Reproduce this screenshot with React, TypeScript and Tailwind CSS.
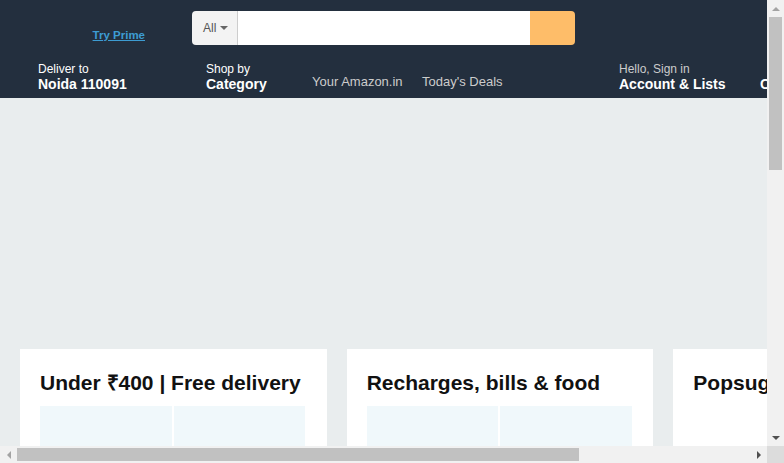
import React from "react";

const cards = [
  { title: "Under ₹400 | Free delivery", tiles: true },
  { title: "Recharges, bills & food", tiles: true },
  { title: "Popsugar beauty box", tiles: false },
];

function NavTwoLine({ top, bottom, topClass = "text-white" }: { top: string; bottom: string; topClass?: string }) {
  return (
    <div className="flex flex-col leading-none">
      <span className={`text-[12px] ${topClass}`}>{top}</span>
      <span className="mt-[2px] text-[14px] font-bold text-white">{bottom}</span>
    </div>
  );
}

// window scrollbars drawn over the page, as in the screenshot
function Scrollbars() {
  return (
    <div className="pointer-events-none fixed inset-0">
      <div className="absolute right-0 top-0 flex h-[446px] w-[17px] flex-col items-center bg-[#f1f1f1]">
        <div className="flex h-[17px] items-center justify-center">
          <span className="h-0 w-0 border-x-[4px] border-b-[4px] border-x-transparent border-b-[#a3a3a3]" />
        </div>
        <div className="h-[153px] w-[13px] bg-[#c1c1c1]" />
        <div className="flex-1" />
        <div className="flex h-[17px] items-center justify-center">
          <span className="h-0 w-0 border-x-[4px] border-t-[4px] border-x-transparent border-t-[#505050]" />
        </div>
      </div>
      <div className="absolute bottom-0 left-0 flex h-[17px] w-[767px] items-center bg-[#f1f1f1]">
        <div className="flex w-[17px] justify-center">
          <span className="h-0 w-0 border-y-[4px] border-r-[4px] border-y-transparent border-r-[#a3a3a3]" />
        </div>
        <div className="h-[13px] w-[562px] bg-[#c1c1c1]" />
        <div className="flex-1" />
        <div className="flex w-[17px] justify-center">
          <span className="h-0 w-0 border-y-[4px] border-l-[4px] border-y-transparent border-l-[#505050]" />
        </div>
      </div>
      <div className="absolute bottom-0 right-0 h-[17px] w-[17px] bg-[#dcdcdc]" />
    </div>
  );
}

export default function App() {
  return (
    <div className="min-w-[1000px] bg-[#e9edee] font-['Liberation_Sans',Arial,sans-serif]">
      {/* Header */}
      <header className="h-[98px] bg-[#232f3e]">
        <div className="flex h-[60px]">
          <div className="flex w-[192px] justify-end pr-[47px] pt-[30px]">
            <a href="#" className="text-[11.5px] font-bold leading-none text-[#3d9cd2] underline">
              Try Prime
            </a>
          </div>
          <div className="mt-[11px] flex h-[34px] w-[383px] overflow-hidden rounded-[4px]">
            <div className="flex w-[46px] items-center gap-[4px] border-r border-[#cdcdcd] bg-[#f3f3f3] pl-[11px] text-[12px] text-[#555]">
              All
              <span className="h-0 w-0 border-x-[4px] border-t-[4px] border-x-transparent border-t-[#666]" />
            </div>
            <div className="flex-1 bg-white" />
            <div className="w-[45px] bg-[#febd69]" />
          </div>
        </div>
        <div className="flex items-start pt-[3px]">
          <div className="w-[206px] pl-[38px]">
            <NavTwoLine top="Deliver to" bottom="Noida 110091" />
          </div>
          <div className="w-[106px]">
            <NavTwoLine top="Shop by" bottom="Category" />
          </div>
          <div className="w-[110px] pt-[12px] text-[13px] leading-none text-[#ccc]">Your Amazon.in</div>
          <div className="w-[197px] pt-[12px] text-[13px] leading-none text-[#ccc]">Today's Deals</div>
          <div className="w-[141px]">
            <NavTwoLine top="Hello, Sign in" bottom="Account & Lists" topClass="text-[#ccc]" />
          </div>
          <div className="pt-[14px] text-[14px] font-bold leading-none text-white">Orders</div>
        </div>
      </header>

      {/* Hero */}
      <div className="h-[251px]" />

      {/* Cards */}
      <div className="flex gap-[20px] px-[20px] pb-[40px]">
        {cards.map((c) => (
          <div key={c.title} className="h-[420px] w-[306.67px] shrink-0 overflow-hidden bg-white px-[20px] pt-[22px]">
            <h2 className="whitespace-nowrap text-[21px] font-bold leading-[24px] text-[#111]">{c.title}</h2>
            {c.tiles && (
              <div className="mt-[11px] grid w-[265px] grid-cols-2 gap-[2px]">
                <div className="h-[130px] bg-[#f0f8fb]" />
                <div className="h-[130px] bg-[#f0f8fb]" />
                <div className="h-[130px] bg-[#f0f8fb]" />
                <div className="h-[130px] bg-[#f0f8fb]" />
              </div>
            )}
          </div>
        ))}
      </div>
      <div className="h-[450px]" />

      <Scrollbars />
    </div>
  );
}
